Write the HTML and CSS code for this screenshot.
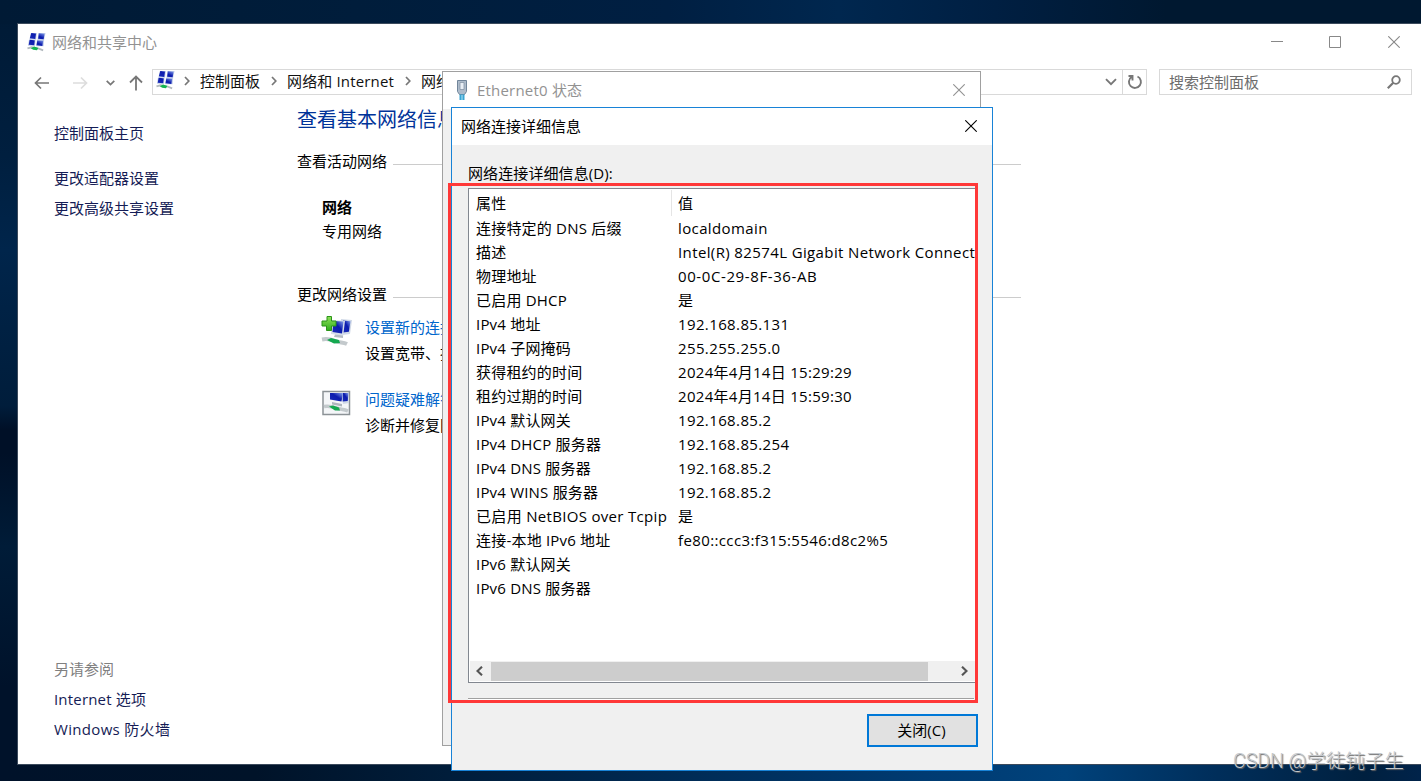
FILE: index.html
```html
<!DOCTYPE html>
<html lang="zh-CN">
<head>
  <meta charset="UTF-8">
  <meta name="viewport" content="width=device-width, initial-scale=1.0">
  <title>网络和共享中心</title>
  <link rel="stylesheet" href="styles.css">
</head>
<body>
  <!-- shared icons -->
  <svg class="defs" width="0" height="0">
    <defs>
      <linearGradient id="screen" x1="0" y1="1" x2="1" y2="0">
        <stop offset="0" stop-color="#1a2cb8"/>
        <stop offset="0.55" stop-color="#0c1cae"/>
        <stop offset="1" stop-color="#8aa6ee"/>
      </linearGradient>
      <linearGradient id="plus" x1="0" y1="0" x2="0" y2="1">
        <stop offset="0" stop-color="#8fe05a"/>
        <stop offset="1" stop-color="#2fae1c"/>
      </linearGradient>
    </defs>
    <symbol id="network" viewBox="0 0 20 20">
      <path d="M4 0.500h6.500l-1 7H2.500zM12 0.500h7.500l-1.500 7.500H11z" fill="#c3cfea"/>
      <path d="M2 8h7l-.5 6H1zM10.500 8h7.500l-.5 6.500h-8z" fill="#c3cfea"/>
      <path d="M4.500 0.500l5 .5-.8 5.800-5.700-.8zM12.500 .8l6 .4-1 6-5.800-.6z" fill="url(#screen)"/>
      <path d="M2.800 7.700l5.400.5-.6 5.300-5.800-.6zM10.800 8.300l6.200.4-.8 5.600-6.200-.8z" fill="url(#screen)"/>
      <path d="M0.500 16.800L5 15.500l7.500 1.500L17 18.700" fill="none" stroke="#b3babf" stroke-width="2"/>
      <path d="M4 16.500l3.500-1.800 4.500 1.500-1.500 2.500-4-.5z" fill="#12b552"/>
    </symbol>
    <symbol id="close" viewBox="0 0 12 12">
      <path d="M0.300 0.300l11.400 11.400M11.700 0.300L0.300 11.700" fill="none" stroke="currentColor" stroke-width="1.100"/>
    </symbol>
    <symbol id="chevron" viewBox="0 0 6 10">
      <path d="M1 1l3.800 4L1 9" fill="none" stroke="currentColor" stroke-width="1.700"/>
    </symbol>
  </svg>

  <div class="window main-window">
    <div class="title-bar">
      <svg class="title-icon" width="19" height="20"><use href="#network"/></svg>
      <span class="title">网络和共享中心</span>
      <div class="controls">
        <svg width="12" height="12" viewBox="0 0 12 12"><path d="M0 5.500h12" stroke="#888"/></svg>
        <svg width="12" height="12" viewBox="0 0 12 12"><path d="M.5.5h11v11H.5z" fill="none" stroke="#888"/></svg>
        <svg width="12" height="12"><use href="#close"/></svg>
      </div>
    </div>

    <div class="nav-bar">
      <div class="nav-buttons">
        <svg width="16" height="14" viewBox="0 0 16 14"><path d="M15 7H1.500M7 1.500L1.500 7 7 12.500" fill="none" stroke="#777" stroke-width="1.700"/></svg>
        <svg class="forward" width="16" height="14" viewBox="0 0 16 14"><path d="M1 7h13.500M9 1.500L14.500 7 9 12.500" fill="none" stroke="#ddd" stroke-width="1.700"/></svg>
        <svg class="recent" width="9" height="6" viewBox="0 0 9 6"><path d="M.7.800l3.800 3.800L8.300.8" fill="none" stroke="#777" stroke-width="1.700"/></svg>
        <svg class="up" width="14" height="16" viewBox="0 0 14 16"><path d="M7 15.500V1.500M1 7.500l6-6 6 6" fill="none" stroke="#777" stroke-width="1.800"/></svg>
      </div>
      <div class="address">
        <svg width="19" height="20"><use href="#network"/></svg>
        <svg class="arrow" width="6" height="10"><use href="#chevron"/></svg>
        <span class="crumb">控制面板</span>
        <svg class="arrow" width="6" height="10"><use href="#chevron"/></svg>
        <span class="wide">网络和 Internet</span>
        <svg class="arrow" width="6" height="10"><use href="#chevron"/></svg>
        <span>网络</span>
        <svg class="drop" width="12" height="8" viewBox="0 0 12 8"><path d="M1 1.200l5 5 5-5" fill="none" stroke="#777" stroke-width="1.900"/></svg>
        <div class="refresh">
          <svg width="16" height="16" viewBox="0 0 16 16"><path d="M10.500 2.500a6 6 0 1 1-6 .5M1.500 2h4v4.500" fill="none" stroke="#777" stroke-width="1.900"/></svg>
        </div>
      </div>
      <div class="search">
        <span>搜索控制面板</span>
        <svg width="14" height="14" viewBox="0 0 14 14"><circle cx="9" cy="5" r="3.800" fill="none" stroke="#777" stroke-width="1.800"/><path d="M6.300 7.700L.8 13.200" stroke="#777" stroke-width="2.200"/></svg>
      </div>
    </div>

    <div class="main-body">
      <div class="sidebar">
        <a class="home">控制面板主页</a>
        <a>更改适配器设置</a>
        <a>更改高级共享设置</a>
        <div class="see-also">
          <span>另请参阅</span>
          <a>Internet 选项</a>
          <a class="firewall">Windows 防火墙</a>
        </div>
      </div>
      <div class="content">
        <h1>查看基本网络信息</h1>
        <div class="section">查看活动网络</div>
        <div class="network">
          <b>网络</b>
          <span>专用网络</span>
        </div>
        <div class="section">更改网络设置</div>
        <div class="task">
          <svg width="32" height="32" viewBox="0 0 32 32">
            <path d="M20 3l11 1-2 14-8 1z" fill="#cfd8e6"/>
            <path d="M22 4.500l7.500.8-1.600 10.500-6 .7z" fill="url(#screen)"/>
            <path d="M11 4l13 .8-1.800 15L10 18z" fill="#d5dde9"/>
            <path d="M12.500 5l10 .5-1.500 12-9.500-1.500z" fill="url(#screen)"/>
            <path d="M14 18.500l8 1v2.500l-9-1z" fill="#b4bcc4"/>
            <path d="M1 23.500c5-1 8-.5 13 1.500s8 1 12 3" fill="none" stroke="#c3c9cc" stroke-width="4"/>
            <path d="M6 24l4-2 8 2 1 3-6 .5z" fill="#14a850"/>
            <path d="M6 0.500h4.500v4.500h4.500v5h-4.500v4.500H5.500V10H1V5h5z" fill="url(#plus)" stroke="#2b9418"/>
          </svg>
          <div>
            <a>设置新的连接</a>
            <p>设置宽带、拨</p>
          </div>
        </div>
        <div class="task">
          <svg width="32" height="32" viewBox="0 0 32 32">
            <path d="M2 4.500h26.500v23H2z" fill="#f4f6f8" stroke="#8c9296" stroke-width="1.500"/>
            <path d="M20 6h8v10l-6 1z" fill="#cfd8e6"/>
            <path d="M22 6h5.500l-.8 8-5 .5z" fill="url(#screen)"/>
            <path d="M9 6h13l-1.500 8.500L9 12.500z" fill="url(#screen)"/>
            <path d="M11 15l10 2v2.500l-10-2z" fill="#aeb6be"/>
            <path d="M3 19.500c5-1 8 0 12 1.500s8 1 12 3" fill="none" stroke="#c3c9cc" stroke-width="3.500"/>
            <path d="M8 19.500l4-1 6 2 1 3-5 0z" fill="#14a850"/>
          </svg>
          <div>
            <a>问题疑难解答</a>
            <p>诊断并修复网</p>
          </div>
        </div>
      </div>
    </div>
  </div>

  <div class="window status-window">
    <div class="title-bar">
      <svg class="plug" width="12" height="20" viewBox="0 0 12 20">
        <path d="M1.500.5h9v11l-2 3h-5l-2-3z" fill="#aebccb" stroke="#71859a"/>
        <path d="M4 2.500h4v7H4z" fill="#e9eff5" stroke="#8796a6" stroke-width=".8"/>
        <path d="M3.500 14.500h5V20h-5z" fill="#39a5d3"/>
        <path d="M6 15v5" stroke="#b5e3f4"/>
      </svg>
      <span class="title">Ethernet0 状态</span>
      <svg class="x" width="12" height="12"><use href="#close"/></svg>
    </div>
  </div>

  <div class="window details-window">
    <div class="title-bar">
      <span class="title">网络连接详细信息</span>
      <svg class="x" width="12" height="12"><use href="#close"/></svg>
    </div>
    <div class="details-body">
      <div class="details-label">网络连接详细信息(D):</div>
      <div class="list">
        <div class="row header"><span>属性</span><span>值</span></div>
        <div class="row"><span>连接特定的 DNS 后缀</span><span>localdomain</span></div>
        <div class="row"><span>描述</span><span>Intel(R) 82574L Gigabit Network Connect</span></div>
        <div class="row"><span>物理地址</span><span class="mac">00-0C-29-8F-36-AB</span></div>
        <div class="row"><span>已启用 DHCP</span><span>是</span></div>
        <div class="row"><span>IPv4 地址</span><span>192.168.85.131</span></div>
        <div class="row"><span>IPv4 子网掩码</span><span>255.255.255.0</span></div>
        <div class="row"><span>获得租约的时间</span><span class="date">2024年4月14日 15:29:29</span></div>
        <div class="row"><span>租约过期的时间</span><span class="date">2024年4月14日 15:59:30</span></div>
        <div class="row"><span>IPv4 默认网关</span><span>192.168.85.2</span></div>
        <div class="row"><span>IPv4 DHCP 服务器</span><span>192.168.85.254</span></div>
        <div class="row"><span>IPv4 DNS 服务器</span><span>192.168.85.2</span></div>
        <div class="row"><span>IPv4 WINS 服务器</span><span>192.168.85.2</span></div>
        <div class="row netbios"><span>已启用 NetBIOS over Tcpip</span><span>是</span></div>
        <div class="row"><span>连接-本地 IPv6 地址</span><span>fe80::ccc3:f315:5546:d8c2%5</span></div>
        <div class="row"><span>IPv6 默认网关</span><span></span></div>
        <div class="row"><span>IPv6 DNS 服务器</span><span></span></div>
        <div class="scrollbar">
          <svg class="left" width="7" height="10" viewBox="0 0 7 10"><path d="M6 .7L1.500 5 6 9.300" fill="none" stroke="#555" stroke-width="2.100"/></svg>
          <div class="thumb"></div>
          <svg class="right" width="7" height="10" viewBox="0 0 7 10"><path d="M1 .7L5.500 5 1 9.300" fill="none" stroke="#555" stroke-width="2.100"/></svg>
        </div>
      </div>
      <div class="separator"></div>
      <button class="close-btn">关闭(C)</button>
    </div>
  </div>

  <div class="highlight"></div>
  <div class="watermark">CSDN @学徒钝子生</div>
</body>
</html>
```

FILE: styles.css
```css
* {
  box-sizing: border-box;
}

body {
  margin: 0;
  width: 1421px;
  height: 781px;
  position: relative;
  overflow: hidden;
  font-family: "Open Sans", "Noto Sans CJK SC", sans-serif;
  font-size: 15px;
  line-height: 24px;
  color: #000;
  white-space: nowrap;
  /* desktop wallpaper: top, left and bottom edges show round the windows */
  background:
    linear-gradient(to right, #001a35, #001d3b 25%, #001f42 47%, #00274f 59%, #001f42 70%, #001830 82%, #001830) 0 0 / 1421px 24px no-repeat,
    linear-gradient(to right, #00122a, #001329 18%, #001e3c 33%, #002b55 48%, #003b72 65%, #00427b 75%, #002f5c 85%, #00203f 96%, #00234a) 0 764px / 1421px 17px no-repeat,
    linear-gradient(to bottom, #001a35, #001f3f 20%, #00254b 32%, #001d3b 52%, #001027 55%, #001027 58%, #001c38 70%, #00122a 88%, #00122a) 0 0 / 18px 781px no-repeat,
    #001a35;
}

.defs {
  position: absolute;
}

svg {
  display: block;
  flex: none;
}

h1,
p {
  margin: 0;
}

.window {
  position: absolute;
}

.title-bar {
  display: flex;
  align-items: center;
  background: #fff;
}

/* main window */
.main-window {
  left: 17px;
  top: 23px;
  width: 1404px;
  height: 742px;
  border: 1px solid #3b4a5c;
  border-right: none;
  background: #fff;
  display: flex;
  flex-direction: column;
}

.main-window .title-bar {
  height: 36px;
  padding-left: 9px;
  color: #929292;
}

.main-window .title {
  margin-left: 6px;
}

.controls {
  display: flex;
  gap: 46px;
  margin-left: auto;
  margin-right: 21px;
  color: #888;
}

.controls svg + svg + svg {
  margin-left: 1px;
}

.nav-bar {
  display: flex;
  height: 26px;
  margin-top: 9px;
}

.nav-buttons {
  display: flex;
  align-items: center;
  width: 134px;
  padding-left: 16px;
  padding-top: 2px;
}

.forward {
  margin-left: 22px;
}

.recent {
  margin-left: 18px;
}

.up {
  margin-left: 14px;
}

.address {
  display: flex;
  align-items: center;
  width: 995px;
  border: 1px solid #d9d9d9;
  padding-left: 3px;
  color: #111;
}

.address > svg:first-child {
  margin-top: -4px;
}

.address span {
  margin-top: -2px;
}

.address .arrow {
  color: #777;
  margin: -3px 10px 0 9px;
}

.address .crumb {
  width: 62px;
}

.address .wide {
  width: 109px;
  letter-spacing: 0.15px;
}

.drop {
  margin-left: auto;
  margin-right: 5px;
}

.refresh {
  display: flex;
  align-items: center;
  justify-content: center;
  width: 24px;
  height: 24px;
  border-left: 1px solid #d9d9d9;
}

.search {
  display: flex;
  align-items: center;
  justify-content: space-between;
  width: 253px;
  margin-left: 12px;
  padding: 0 10px 0 9px;
  border: 1px solid #d9d9d9;
  color: #6d6d6d;
}

.main-body {
  display: flex;
  flex: 1;
}

.sidebar {
  display: flex;
  flex-direction: column;
  width: 279px;
  padding: 23px 0 20px 36px;
  line-height: 30px;
  color: #151c55;
}

.home {
  margin-bottom: 15px;
}

.see-also {
  display: flex;
  flex-direction: column;
  margin-top: auto;
}

.see-also span {
  color: #808080;
}

.see-also a {
  letter-spacing: 0.18px;
}

.see-also .firewall {
  letter-spacing: 0.32px;
}

.content {
  width: 724px;
  padding-top: 10px;
}

.content h1 {
  font-size: 20px;
  line-height: 30px;
  font-weight: normal;
  color: #003399;
}

.section {
  display: flex;
  align-items: center;
  margin-top: 14px;
}

.section::after {
  content: "";
  flex: 1;
  height: 1px;
  margin: 6px 0 0 6px;
  background: #ccc;
}

.network {
  display: flex;
  flex-direction: column;
  margin: 22px 0 39px 25px;
}

.task {
  display: flex;
  margin: 8px 0 20px 24px;
  line-height: 26px;
}

.task svg {
  margin-top: 2px;
}

.task + .task {
  margin-top: 0;
}

.task + .task svg {
  margin-top: 1px;
}

.task div {
  margin-left: 12px;
}

.task a {
  color: #0066cc;
}

/* adapter status window */
.status-window {
  left: 442px;
  top: 71px;
  width: 539px;
  height: 675px;
  border: 1px solid #a0a0a0;
  background: #f0f0f0;
}

.status-window .title-bar {
  height: 37px;
  padding: 0 15px 2px 13px;
  color: #929292;
}

.status-window .title {
  margin-left: 9px;
  letter-spacing: 0.2px;
}

.title-bar .x {
  margin-left: auto;
}

/* connection details dialog */
.details-window {
  left: 451px;
  top: 107px;
  width: 542px;
  height: 664px;
  border: 1px solid #1883d7;
  background: #f0f0f0;
}

.details-window .title-bar {
  height: 37px;
  padding: 0 15px 2px 9px;
}

.details-body {
  display: flex;
  flex-direction: column;
  padding: 16px 14px 0 16px;
}

.details-label {
  height: 27px;
  letter-spacing: 0.1px;
}

.list {
  display: flex;
  flex-direction: column;
  width: 508px;
  height: 495px;
  padding: 1px 0 1px 1px;
  border: 1px solid #828790;
  border-right: none;
  background: #fff;
  overflow: hidden;
}

.row {
  display: flex;
  height: 24px;
}

.row span:first-child {
  width: 202px;
  padding-left: 6px;
  letter-spacing: 0.2px;
}

.row span + span {
  padding-left: 6px;
  letter-spacing: 0.38px;
}

.row .date {
  letter-spacing: 0.3px;
}

.row .mac {
  letter-spacing: 0.6px;
}

.netbios span:first-child {
  letter-spacing: 0.32px;
}

.header {
  height: 26px;
  line-height: 26px;
}

.header span:first-child {
  border-right: 1px solid #e5e5e5;
}

.scrollbar {
  display: flex;
  align-items: center;
  height: 20px;
  margin-top: auto;
  background: #f0f0f0;
}

.scrollbar .left {
  margin: 0 8px 0 6px;
}

.thumb {
  width: 437px;
  height: 19px;
  background: #cdcdcd;
}

.scrollbar .right {
  margin-left: 33px;
}

.separator {
  width: 506px;
  height: 2px;
  margin-top: 15px;
  background: #a0a0a0;
  border-bottom: 1px solid #fff;
}

.close-btn {
  align-self: flex-end;
  width: 111px;
  height: 33px;
  margin-top: 14px;
  padding: 0 2px 2px 0;
  border: 2px solid #0078d7;
  background: #e1e1e1;
  font: inherit;
}

/* red marker box round the details list */
.highlight {
  position: absolute;
  left: 448px;
  top: 183px;
  width: 530px;
  height: 520px;
  border: 3px solid #ff3838;
}

.watermark {
  position: absolute;
  left: 1233px;
  top: 750px;
  font-family: Roboto, "Noto Sans CJK SC", sans-serif;
  font-size: 19.5px;
  font-weight: 300;
  color: #c4c8cc;
  text-shadow: 1px 1px 1px #666;
}
```
